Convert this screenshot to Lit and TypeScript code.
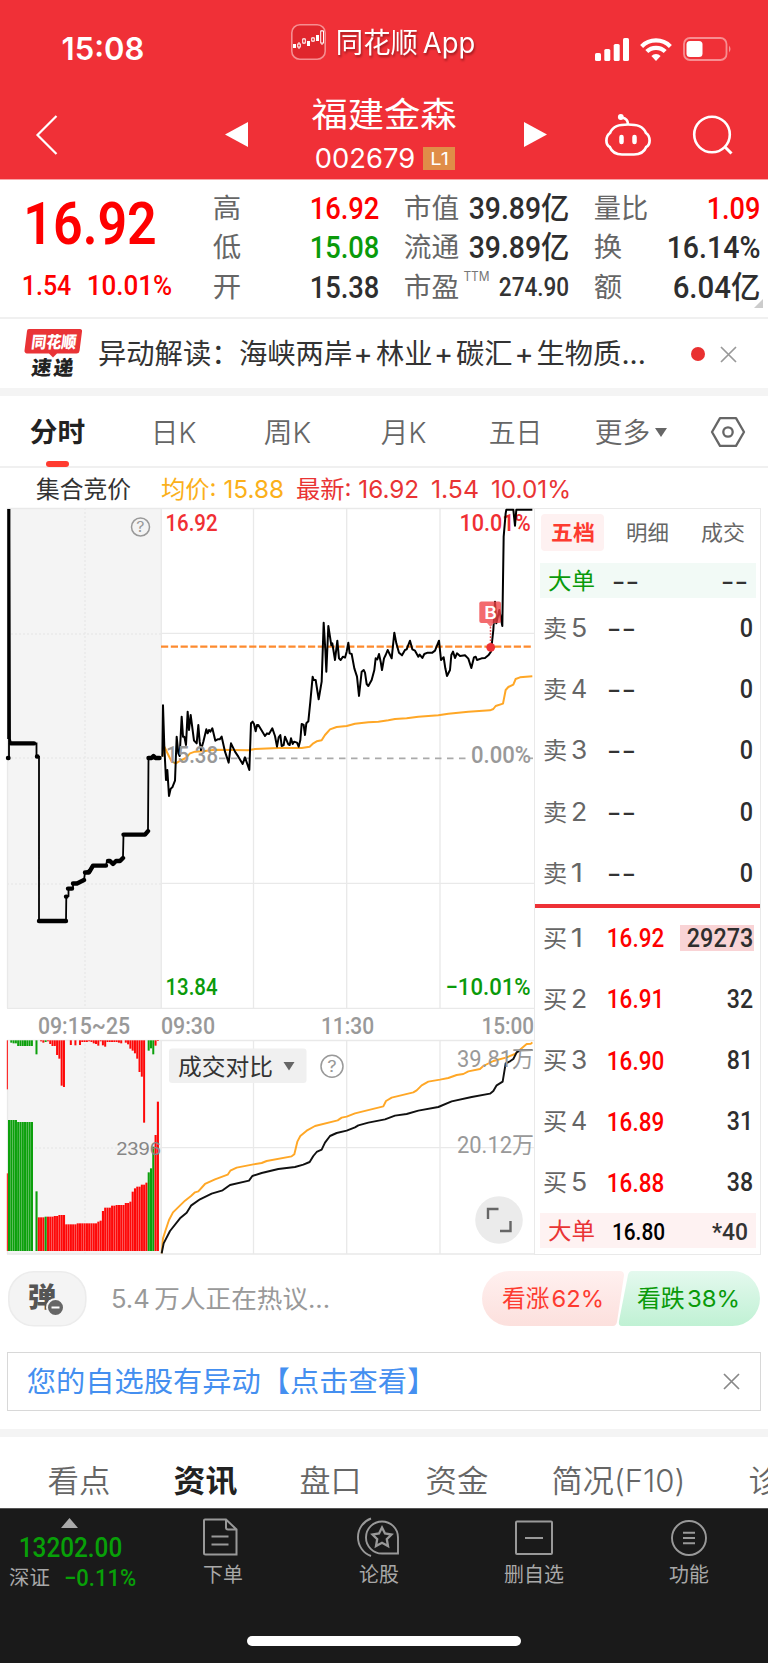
import { LitElement, html, svg, css } from "lit";
import { customElement } from "lit/decorators.js";

type Opt = { w?: number; c?: string; f?: "din" | "ui" | "hel"; h?: number };

const CJK = '"Noto Sans CJK SC", sans-serif';
const FAMILY = {
  din: `Roboto, ${CJK}`,
  ui: `Inter, ${CJK}`,
  hel: `"Liberation Sans", ${CJK}`,
};

/* One line of text whose glyphs fill exactly `width` pixels. */
const fit = (text: string, width: number, size: number, o: Opt = {}) => {
  const h = o.h ?? Math.round(size * 1.1);
  const b = size * 0.045;
  return html`<svg class="fit" width=${width} height=${h}>
    <text x=${-b} y=${h / 2 + size * 0.36} font-size=${size} font-weight=${o.w ?? 400}
      font-family=${FAMILY[o.f ?? "ui"]} fill=${o.c ?? "#333"}
      textLength=${width + 2 * b} lengthAdjust="spacingAndGlyphs">${text}</text></svg>`;
};

/* The same inside a chart, placed by its left edge and vertical centre. */
const label = (text: string, x: number, cy: number, width: number, size: number, o: Opt = {}) => svg`
  <text x=${x - size * 0.045} y=${cy + size * 0.36} font-size=${size} font-weight=${o.w ?? 500}
    font-family=${FAMILY[o.f ?? "din"]} fill=${o.c ?? "#999"}
    textLength=${width + size * 0.09} lengthAdjust="spacingAndGlyphs">${text}</text>`;

const RED = "#fe0000";
const GREEN = "#0a9a0a";

const base = css`
  :host { display: block; box-sizing: border-box; }
  * { box-sizing: border-box; }
  svg { display: block; flex: none; overflow: visible; }
`;

@customElement("app-header")
class AppHeader extends LitElement {
  static styles = [base, css`
    :host { background: #f03037; height: 180px; border-bottom: 1px solid #f8a5a8; }
    .status { height: 84px; display: grid; align-items: center; padding-left: 63px; grid-template-columns: 228px 46px 258px 45px 43px 1fr; }
    .low { margin-top: 14px; }
    .brand { filter: drop-shadow(1px 2px 1px rgba(60,0,0,.45)); }
    .nav { height: 95px; display: grid; align-items: center; padding-left: 36px; grid-template-columns: 189px 88px 211px 81px 88px 1fr; }
    .down { margin-top: 6px; }
    .title { align-self: start; padding-top: 11px; }
    .code { display: flex; align-items: center; gap: 9px; margin: 11px 0 0 3px; }
    .badge { width: 32px; height: 23px; background: #e08d48; display: flex; align-items: center; justify-content: center; }
  `];
  render() {
    const w = { c: "#fff" };
    return html`
      <div class="status">
        <div class="low">${fit("15:08", 80, 31, { ...w, w: 600 })}</div>
        <svg width="35" height="36" viewBox="0 0 35 36">
          <rect x=".8" y=".8" width="33.4" height="34.4" rx="8" fill="#e0262d" stroke="#f68d90" stroke-width="1.6"/>
          <g fill="#fff"><rect x="2" y="20" width="3" height="4"/><rect x="16" y="17" width="3" height="5"/><rect x="25" y="11" width="3" height="6"/></g>
          <g fill="none" stroke="#fff"><path d="M8 18v7M13 14v6M22 13v5M31 6v15"/><g fill="#e0262d"><rect x="6.7" y="20" width="2.6" height="3"/><rect x="11.7" y="15" width="2.6" height="4"/><rect x="20.7" y="14" width="2.6" height="3"/><rect x="29.7" y="7" width="2.8" height="12"/></g></g>
        </svg>
        <div class="brand">${fit("同花顺\u2009App", 137, 28, w)}</div>
        <svg class="low" width="34" height="23" fill="#fff"><rect y="15" width="6" height="8" rx="1.6"/><rect x="9.3" y="11" width="6" height="12" rx="1.6"/><rect x="18.7" y="6" width="6" height="17" rx="1.6"/><rect x="28" width="6" height="23" rx="1.6"/></svg>
        <svg class="low" width="32" height="23" viewBox="0 0 32 23" fill="none" stroke="#fff" stroke-width="4.2"><path d="M1.6 8.4a20.4 20.4 0 0 1 28.8 0"/><path d="M6.8 13.6a13 13 0 0 1 18.4 0"/><path d="M16 23l-4.6-5a6.4 6.4 0 0 1 9.2 0z" fill="#fff" stroke="none"/></svg>
        <svg class="low" width="48" height="24"><rect x="1" y="1" width="42.5" height="22" rx="6" fill="none" stroke="#f78e91" stroke-width="1.8"/><rect x="3.5" y="4" width="16" height="16" rx="3.5" fill="#fff"/><path d="M46 8.5q3 3.5 0 7z" fill="#f78e91"/></svg>
      </div>
      <div class="nav">
        <svg class="down" width="22" height="40" fill="none" stroke="#fff" stroke-width="2.2"><path d="M20.5 1L1.5 20l19 19"/></svg>
        <svg class="down" width="23" height="25"><path d="M23 0v25L0 12.5z" fill="#fff"/></svg>
        <div class="title">
          ${fit("福建金森", 142, 34.5, { ...w, h: 40 })}
          <div class="code">${fit("002679", 98, 27, { ...w, h: 24 })}<div class="badge">${fit("L1", 17, 17, w)}</div></div>
        </div>
        <svg class="down" width="23" height="25"><path d="M0 0v25l23-12.5z" fill="#fff"/></svg>
        <svg class="down" width="46" height="42" fill="none" stroke="#fff" stroke-width="2.7"><path d="M17 3.500q6 1 6 7"/><circle cx="15.800" cy="3" r="2.900" fill="#fff" stroke="none"/><path d="M23 10.500C14 10.500 8 12 5 19C2.800 20.500 1.500 23 1.400 26.500C1.400 29.500 2.600 32 4.800 33C7 38.500 11 40.500 17 40.500H29C35 40.500 39 38.500 41.200 33C43.400 32 44.600 29.500 44.600 26.500C44.500 23 43.200 20.500 41 19C38 12 32 10.500 23 10.500z"/><path d="M16.500 23v5M29.500 23v5" stroke-width="4.500" stroke-linecap="round"/></svg>
        <svg class="down" width="40" height="40" fill="none" stroke="#fff" stroke-width="2.6"><circle cx="19" cy="19.500" r="17.8"/><path d="M31.500 31.500l7 7" stroke-width="3"/></svg>
      </div>`;
  }
}

@customElement("quote-stats")
class QuoteStats extends LitElement {
  static styles = [base, css`
    :host { height: 139px; border-bottom: 2px solid #f0f0f0; display: grid; grid-template-columns: 214px 164px 163px 164px; column-gap: 0; }
    .price { padding: 12px 0 0 26px; }
    .change { display: flex; gap: 18px; margin: 21px 0 0 -3px; }
    .col { padding-top: 8px; display: grid; grid-auto-rows: 39.5px; }
    .gap { margin-left: 27px; margin-right: -27px; }
    .wide { margin-left: 54px; margin-right: -54px; }
    .row { display: flex; align-items: center; justify-content: space-between; }
    .ttm { align-self: flex-start; margin: 2px 0 0 -6px; }
    .corner { grid-column: 4; justify-self: end; margin: -13px -58px 0 0; }
  `];
  render() {
    const k = (t: string, w = 26) => fit(t, w, 27, { c: "#666" });
    const v = (t: string, w: number, c = "#2e2e2e") => fit(t, w, 30.5, { c, f: "din", w: 500 });
    return html`
      <div class="price">
        ${fit("16.92", 128, 60, { c: RED, f: "din", w: 600, h: 60 })}
        <div class="change">${fit("1.54", 47, 28, { c: RED, f: "din", w: 500, h: 24 })}${fit("10.01%", 83, 28, { c: RED, f: "din", w: 500, h: 24 })}</div>
      </div>
      <div class="col">
        <div class="row">${k("高")}${v("16.92", 67, RED)}</div>
        <div class="row">${k("低")}${v("15.08", 67, GREEN)}</div>
        <div class="row">${k("开")}${v("15.38", 67)}</div>
      </div>
      <div class="col gap">
        <div class="row">${k("市值", 53)}${v("39.89亿", 98)}</div>
        <div class="row">${k("流通", 53)}${v("39.89亿", 98)}</div>
        <div class="row">${k("市盈", 53)}<div class="ttm">${fit("TTM", 25, 13, { c: "#777" })}</div>${fit("274.90", 68, 26, { f: "din", w: 500 })}</div>
      </div>
      <div class="col wide">
        <div class="row">${k("量比", 52)}${v("1.09", 51, RED)}</div>
        <div class="row">${k("换")}${v("16.14%", 91)}</div>
        <div class="row">${k("额")}${v("6.04亿", 85)}</div>
      </div>
      <svg class="corner" width="9" height="9"><path d="M9 0v9H0z" fill="#ccc"/></svg>`;
  }
}

@customElement("news-strip")
class NewsStrip extends LitElement {
  static styles = [base, css`
    :host { height: 77px; border-bottom: 8px solid #f4f4f4; display: grid; align-items: center; padding-left: 24px; grid-template-columns: 75px 592px 30px 1fr; }
    .line { margin-top: 1px; }
    .logo { margin-top: -2px; }
    .headline { font: 28.3px Inter, "Noto Sans CJK SC", sans-serif; }
  `];
  render() {
    return html`
      <svg class="logo" width="59" height="48" viewBox="0 0 59 48">
        <path d="M5 0H56a2 2 0 0 1 2 2.500L55.500 22a3 3 0 0 1-3 2.500H33l-4 4-4-4H3a2.500 2.500 0 0 1-2.500-3L3 2a2 2 0 0 1 2-2z" fill="#e93336"/>
        <g font-family="Noto Sans CJK SC" font-weight="900" transform="skewX(-7)"><text x="9" y="18.500" font-size="16.500" fill="#fff" textLength="45" lengthAdjust="spacingAndGlyphs">同花顺</text><text x="12.500" y="46" font-size="20" fill="#222" textLength="42">速递</text></g>
      </svg>
      <svg class="line headline" width="546" height="30"><text y="24.500" fill="#333"><tspan x="-1">异动解读：</tspan><tspan x="140">海峡两岸</tspan><tspan x="254.500" font-size="29">+</tspan><tspan x="277">林业</tspan><tspan x="335" font-size="29">+</tspan><tspan x="357">碳汇</tspan><tspan x="415.500" font-size="29">+</tspan><tspan x="437.500">生物质...</tspan></text></svg>
      <svg class="line" width="14" height="14"><circle cx="7" cy="7" r="7" fill="#e93030"/></svg>
      <svg class="line" width="15" height="15" stroke="#999" stroke-width="1.7"><path d="M0 0l15 15M15 0L0 15"/></svg>`;
  }
}

@customElement("period-tabs")
class PeriodTabs extends LitElement {
  static styles = [base, css`
    :host { height: 72px; border-bottom: 2px solid #f0f0f0; display: grid; align-items: center; padding-left: 31px; grid-template-columns: 121px 113px 117px 108px 106px 115px 1fr; }
    .active { height: 72px; width: 53px; display: flex; flex-direction: column; align-items: center; padding-top: 21px; }
    .mark { width: 23px; height: 6px; border-radius: 3px; background: #ff3b30; margin-top: 14px; }
    .more { display: flex; align-items: center; gap: 6px; }
  `];
  render() {
    const t = (s: string, w: number) => fit(s, w, 28, { c: "#666", w: 350 });
    return html`
      <div class="active">${fit("分时", 53, 27, { c: "#222", w: 700 })}<div class="mark"></div></div>
      ${t("日K", 43)}${t("周K", 45)}${t("月K", 43)}${t("五日", 51)}
      <div class="more">${t("更多", 53)}<svg width="12" height="9"><path d="M0 0h12L6 9z" fill="#666"/></svg></div>
      <svg width="34" height="30" fill="none" stroke="#666" stroke-width="2.3" stroke-linejoin="round"><path d="M9 1.200h16L33 15l-8 13.800H9L1 15z"/><circle cx="17" cy="15" r="4.700"/></svg>`;
  }
}

@customElement("chart-legend")
class ChartLegend extends LitElement {
  static styles = [base, css`
    :host { height: 40px; padding: 1px 0 0 37px; display: grid; align-items: center; grid-template-columns: 125px 135px 135px 60px 1fr; }
  `];
  render() {
    const r = { c: "#e93434" };
    return html`${fit("集合竞价", 93, 24, { c: "#333", h: 28 })}${fit("均价: 15.88", 121, 24, { c: "#fbb01a" })}${fit("最新: 16.92", 121, 24, r)}${fit("1.54", 46, 24, r)}${fit("10.01%", 78, 24, r)}`;
  }
}

/* Intraday series, in thirds of a pixel from (155, 500). */
const PRICE = "22,770 24,616 28,740 33,840 37,810 42,888 47,866 52,862 60,842 65,710 70,760 74,768 80,650 84,710 88,710 93,735 98,635 102,690 107,645 117,722 125,730 130,675 134,725 138,750 145,725 154,688 158,700 162,690 166,695 172,685 181,722 188,718 194,718 200,710 210,755 221,788 228,730 240,755 250,770 263,792 270,772 283,810 288,670 293,665 297,672 302,694 306,675 310,675 330,708 336,700 342,702 352,685 360,708 366,740 371,712 376,705 380,738 386,735 390,710 400,733 404,735 408,715 413,732 417,725 426,728 431,740 436,720 440,672 446,675 450,705 454,670 460,664 466,605 473,530 476,540 482,540 491,598 500,545 506,368 511,450 514,515 520,378 529,436 532,430 540,480 547,422 552,475 557,480 564,470 570,473 575,455 580,428 584,460 590,462 598,505 606,530 612,588 620,515 626,510 630,518 635,552 640,558 650,540 658,510 662,475 667,478 672,462 677,485 681,510 687,475 692,465 698,450 710,475 718,398 724,430 732,458 741,466 750,450 755,448 765,422 772,448 780,452 790,470 794,464 802,474 808,462 818,458 832,458 840,452 852,422 858,480 866,472 871,505 876,528 885,510 889,465 894,455 900,474 906,460 915,468 930,466 940,476 949,504 957,472 962,470 966,480 980,475 990,474 1000,466 1008,455 1015,390 1020,305 1024,370 1033,330 1042,378 1046,110 1052,40 1054,29 1075,29 1080,77 1084,29 1132,29";
const AVERAGE = "22,770 28,740 40,765 50,785 62,790 80,780 92,774 105,760 120,755 150,753 180,749 230,750 280,751 300,747 370,744 440,744 464,740 475,730 485,724 500,721 510,705 525,688 545,681 575,678 600,671 640,667 670,665 700,661 720,657 755,655 790,650 850,646 880,641 940,635 1005,631 1015,627 1022,618 1044,611 1052,570 1060,561 1075,554 1082,537 1095,532 1132,529";
/* Cumulative volume, in thirds of a pixel from (155, 1030). */
const VOL_PREV = "20,670 24,625 32,600 42,570 54,547 90,512 108,498 120,487 130,484 150,462 180,448 218,434 226,422 245,413 295,403 320,399 335,393 410,379 418,373 427,335 436,318 455,302 480,288 548,271 560,263 575,260 600,250 685,229 693,213 710,203 775,187 785,181 800,166 820,155 855,149 880,144 905,135 925,132 940,124 975,117 985,108 1015,93 1055,82 1080,72 1115,42 1128,41 1132,37";
const VOL_NOW = "20,670 26,640 45,603 75,565 95,548 108,527 135,508 170,491 203,481 225,465 282,452 292,438 320,429 370,417 420,411 445,404 464,396 475,378 485,366 500,359 510,338 525,318 545,309 575,302 600,292 610,286 640,278 690,268 720,257 755,252 790,242 850,231 890,214 950,201 1005,191 1015,183 1025,166 1043,155 1052,100 1065,94 1075,87 1085,67 1095,61 1132,60";
const AUCTION = "9,758 9,509 10,739 11,743.4 34,743.4 36.5,743.4 36.5,757 39,757 39,921 66,921 66.3,896.6 68.5,896 68.5,888.6 73,888 73,883.5 80,882 84,880 85,872.5 89,870 93,865.6 106,865.5 107,861 111,861 113,864 115,861 120,860 123,857 123.5,834.6 145,834.6 148,831 148.5,758 152,758 153,756 155,758 160,758";
const AUCTION_DOTS = ["M11 743.4H34", "M37 756.5h.5", "M39 921H66", "M66 896.600h.5M68 888.600h4M73 883.500h4L84 880M85 872.500h4L93 865.600H106", "M108 861h2l3 3 3-3h4l3-3", "M123.500 834.600H145l3-3.500", "M148.500 758h3l2-2 2 2h4", "M8 758h.5"];

/* Auction bars: [slot count, top, is green]; heights in thirds of a pixel from 1030. */
const MATCHED: [number, number, boolean][] = [
  [4, 270, true], [7, 276, true], [1, 663, true], [1, 484, true], [3, 562, false], [1, 560, true], [3, 560, false], [2, 558, false], [3, 555, false],
  [5, 583, false], [9, 580, false], [1, 575, false], [1, 572, false], [1, 543, false], [3, 533, false], [2, 527, false], [4, 525, false], [2, 519, false],
  [1, 515, false], [1, 485, false], [1, 475, false], [2, 470, false], [2, 464, false], [1, 458, false], [1, 427, true], [1, 415, true], [1, 350, true], [1, 315, false], [1, 215, false],
];
const UNMATCHED = [31, 38, 40, 40, 48, 48, 48, 48, 48, 48, 48, 31, 73, 31, 34, 38, 36, 34, 42, 48, 48, 75, 86, 167, 171, 31, 31, 45, 31, 46, 31, 45, 36, 36, 36, 34, 36, 40, 42, 47, 34, 46, 50, 36, 36, 36, 36, 36, 38, 40, 31, 38, 43, 56, 62, 70, 86, 126, 140, 278, 31, 62, 55, 73, 47, 33];
const GREEN_TOP = new Set([1, 2, 3, 4, 5, 6, 7, 8, 9, 10, 12, 16, 61, 62, 63]);

@customElement("trend-chart")
class TrendChart extends LitElement {
  static styles = [base, css`:host { width: 534px; height: 747px; }`];
  bars() {
    const out: unknown[] = [];
    let slot = 0;
    for (const [n, top, green] of MATCHED)
      for (let i = 0; i < n; i++, slot++)
        out.push(svg`<rect x=${24 + slot * 6.87} y=${top} width="6.3" height=${663 - top} fill=${green ? "#0ca00c" : "#fe0808"}/>`);
    UNMATCHED.forEach((b, i) => out.push(svg`<rect x=${24 + i * 6.87} y="31" width="6" height=${b - 31} fill=${GREEN_TOP.has(i) ? "#0ca00c" : "#fe0808"}/>`));
    return out;
  }
  render() {
    return html`<svg width="534" height="747" viewBox="0 508 534 747">
      <g><rect x="7" y="508" width="154" height="500" fill="#f4f4f4"/><rect x="7" y="1040" width="154" height="214" fill="#f4f4f4"/></g>
      <g stroke="#e9e9e9" stroke-width="1.3" fill="none">
        <path d="M7 508.500H534M7 1008.300H534M7 1040.500H534M7 1254H534"/>
        <path d="M161.300 508V1008M161.300 1040V1254M253.500 508V1008M253.500 1040V1254M346.700 508V1008M346.700 1040V1254M440 508V1008M440 1040V1254"/>
        <path d="M161 633.300H534M161 883.300H534M161 1147.700H534"/>
        <path d="M7.500 508V1008M7.500 1040V1254"/>
        <path d="M7 634H161M7 884H161M7 758H161M85 508V1008M85 1040V1254M7 1148H161" stroke-dasharray="2 2"/>
      </g>
      <polyline points=${AUCTION} fill="none" stroke="#000" stroke-width="1.8"/>
      <path d=${AUCTION_DOTS.join("")} fill="none" stroke="#000" stroke-width="4.400" stroke-linecap="round" stroke-linejoin="round"/>
      <path d="M8.800 509V739" stroke="#000" stroke-width="3.200"/>
      <path d="M161 646.700H533" stroke="#fd8a2e" stroke-width="2.200" stroke-dasharray="7.200 2.600"/>
      <path d="M219 758.300H470" stroke="#aaa" stroke-width="1.700" stroke-dasharray="6.500 5.500"/>
      <path d="M529 758.300h4" stroke="#aaa" stroke-width="1.700"/>
      ${label("16.92", 166.500, 522.500, 50, 24, { c: "#f02f34" })}
      ${label("10.01%", 460.500, 522.500, 69, 24, { c: "#f02f34" })}
      ${label("13.84", 166.500, 986, 50, 24, { c: GREEN })}
      ${label("−10.01%", 446.500, 986, 83, 24, { c: GREEN })}
      <g transform="translate(155 500) scale(.33333)" fill="none" stroke-width="6" stroke-linejoin="round">
        <polyline points=${AVERAGE} stroke="#ffa726"/><polyline points=${PRICE} stroke="#000"/>
      </g>
      ${label("15.38", 167, 755, 50, 23, { c: "#999" })}
      ${label("0.00%", 472, 755, 58, 23, { c: "#999" })}
      <g><rect x="479.300" y="601.500" width="21.700" height="21.500" rx="2" fill="#ef4145" fill-opacity=".78"/><path d="M487 623h7l-3.500 4z" fill="#f3787b"/><path d="M490.500 627v16" stroke="#e84a4f" stroke-width="1.500" stroke-dasharray="1.600 1.500"/><circle cx="490.700" cy="647.300" r="4.400" fill="#ed3237"/></g>
      ${label("B", 485, 612.600, 11, 17, { c: "#fff", f: "ui", w: 600 })}
      <g fill="none" stroke="#999" stroke-width="1.500"><circle cx="140.500" cy="527" r="9"/><circle cx="332" cy="1066.300" r="11"/></g>
      ${label("?", 137, 527.300, 7, 14, { f: "ui", w: 400 })}
      ${label("09:15~25", 39, 1025.500, 90, 24)}${label("09:30", 162, 1025.500, 52, 24)}${label("11:30", 322, 1025.500, 51, 24)}${label("15:00", 482.500, 1025.500, 50.500, 24)}
      <g transform="translate(0 1030) scale(.33333)"><rect x="20.500" y="31" width="3" height="147" fill="#fe0808"/><rect x="20.500" y="430" width="3" height="233" fill="#fe0808"/>${this.bars()}</g>
      ${label("2396", 117, 1148.800, 43, 18.500, { f: "hel", w: 400, c: "#868686" })}
      <rect x="169" y="1048.500" width="137.500" height="34.500" rx="3" fill="#efefef" fill-opacity=".93"/>
      ${label("成交对比", 179, 1066.300, 93, 23, { f: "ui", w: 400, c: "#333" })}
      <path d="M283.500 1062h11l-5.500 8.500z" fill="#666"/>
      ${label("?", 328, 1066.700, 8, 16, { f: "ui", w: 400 })}
      <g transform="translate(155 1030) scale(.33333)" fill="none" stroke-width="5.800" stroke-linejoin="round">
        <polyline points=${VOL_PREV} stroke="#ffa726"/><polyline points=${VOL_NOW} stroke="#111"/>
      </g>
      ${label("39.81万", 458, 1058.500, 75, 23, { w: 400 })}${label("20.12万", 458, 1144.500, 75, 23, { w: 400 })}
      <circle cx="499" cy="1220" r="23.800" fill="#ebebeb"/>
      <path d="M488 1219v-10h10.500M500 1231h10.500v-10" fill="none" stroke="#666" stroke-width="2.400"/>
    </svg>`;
  }
}

@customElement("order-book")
class OrderBook extends LitElement {
  static styles = [base, css`
    :host { width: 227px; height: 747px; border: 1px solid #e9e9e9; }
    .tabs { height: 54px; padding: 5px 0 0 6px; display: grid; grid-template-columns: 86px 75px 1fr; }
    .tab { height: 36px; display: flex; align-items: center; }
    .on { width: 63px; height: 37px; justify-content: center; background: #fef1f1; border-radius: 4px; }
    .big { height: 35px; margin: 0 4px 0 5px; padding: 0 9px; display: grid; align-items: center; grid-template-columns: 64px 1fr auto; background: #f2faf6; }
    .buy { background: #fef2f2; }
    .row { height: 61.2px; padding: 0 8px 1px 9px; display: grid; align-items: center; grid-template-columns: 28px 36px 1fr auto; }
    .rule { height: 3.6px; background: #ee3136; }
    .hot { background: #f9d3d5; padding: 0 2px 0 8px; margin-right: -2px; }
  `];
  dashes(w: number) {
    return fit("--", w, 27, { c: "#333" });
  }
  level(side: string, n: number, price: string, qty: string, w: number) {
    const q = fit(qty, w, 25.5, { f: "din", w: 500, c: "#2e2e2e", h: 26 });
    return html`<div class="row">${fit(side, 22, 24, { c: "#666" })}${fit(String(n), n === 1 ? 10 : 14, 25, { c: "#666" })}
      ${price === "--" ? this.dashes(27) : fit(price, 55, 26, { f: "din", w: 500, c: RED })}
      ${qty.length > 4 ? html`<div class="hot">${q}</div>` : q}</div>`;
  }
  render() {
    return html`
      <div class="tabs">
        <div class="tab on">${fit("五档", 42, 21, { c: "#fd3b30", w: 700 })}</div>
        <div class="tab">${fit("明细", 41, 21, { c: "#666" })}</div>
        <div class="tab">${fit("成交", 42, 21, { c: "#666" })}</div>
      </div>
      <div class="big">${fit("大单", 45, 23, { c: GREEN, h: 27 })}${this.dashes(25)}${this.dashes(25)}</div>
      ${[5, 4, 3, 2, 1].map((n) => this.level("卖", n, "--", "0", 11))}
      <div class="rule"></div>
      ${this.level("买", 1, "16.92", "29273", 64)}
      ${this.level("买", 2, "16.91", "32", 24)}
      ${this.level("买", 3, "16.90", "81", 24)}
      ${this.level("买", 4, "16.89", "31", 24)}
      ${this.level("买", 5, "16.88", "38", 24)}
      <div class="big buy">${fit("大单", 45, 23, { c: "#e93434" })}${fit("16.80", 51, 24, { f: "din", w: 500, c: "#000" })}${fit("*40", 34, 24, { f: "din", w: 500 })}</div>`;
  }
}

@customElement("talk-bar")
class TalkBar extends LitElement {
  static styles = [base, css`
    :host { height: 72px; padding: 16px 8px 0; display: grid; align-items: start; grid-template-columns: 104px 370px 278px; }
    .talk { padding-top: 14px; }
  `];
  render() {
    return html`
      <svg width="78" height="56"><rect x=".8" y=".8" width="77" height="54" rx="25" fill="#f4f4f4" stroke="#ececec" stroke-width="1.600"/>
        ${label("弹", 21, 26, 26, 27, { f: "ui", w: 900, c: "#555" })}
        <circle cx="47.500" cy="36.500" r="8.500" fill="#666" stroke="#f4f4f4" stroke-width="2"/><path d="M43.500 36.500h8" stroke="#fff" stroke-width="2"/></svg>
      <div class="talk">${fit("5.4\u2009万人正在热议...", 217, 25, { c: "#999" })}</div>
      <svg width="278" height="56">
        <defs>
          <linearGradient id="up" x2="0" y2="1"><stop stop-color="#fff0ef"/><stop offset="1" stop-color="#fce0dd"/></linearGradient>
          <linearGradient id="dn" x2="0" y2="1"><stop stop-color="#e4f9ee"/><stop offset="1" stop-color="#c0f1d4"/></linearGradient>
        </defs>
        <path d="M27.500 0H138a4 4 0 0 1 4 4.500L135 51q-1 4-4 4H27.500a27.500 27.500 0 0 1 0-55z" fill="url(#up)"/>
        <path d="M250.500 0H150q-3 0-4 4L137 50q-1 5 3 5H250.500a27.500 27.500 0 0 0 0-55z" fill="url(#dn)"/>
        ${label("看涨\u200a62%", 21, 27.500, 100, 23.500, { f: "ui", w: 400, c: "#fd3b30" })}
        ${label("看跌\u200a38%", 156, 27.500, 101, 23.500, { f: "ui", w: 400, c: GREEN })}
      </svg>`;
  }
}

@customElement("alert-box")
class AlertBox extends LitElement {
  static styles = [base, css`
    :host { height: 110px; padding: 25px 7px 18px; border-bottom: 8px solid #f4f4f4; }
    .box { height: 59px; border: 1.5px solid #d8d8d8; padding: 0 21px 0 20px; display: flex; align-items: center; justify-content: space-between; }
  `];
  render() {
    return html`<div class="box">${fit("您的自选股有异动【点击查看】", 407, 28.500, { c: "#448ff0" })}
      <svg width="15" height="15" stroke="#888" stroke-width="1.700"><path d="M0 0l15 15M15 0L0 15"/></svg></div>`;
  }
}

@customElement("info-tabs")
class InfoTabs extends LitElement {
  static styles = [base, css`
    :host { height: 71px; padding: 17px 0 0 49px; overflow: hidden; display: grid; align-items: center; grid-template-columns: 126px 126px 126px 126px 197px 60px; }
  `];
  render() {
    const t = (s: string, w: number) => fit(s, w, 31, { c: "#666", w: 350 });
    return html`${t("看点", 60)}${fit("资讯", 61, 31, { c: "#222", w: 700 })}${t("盘口", 59)}${t("资金", 60)}${t("简况(F10)", 131)}${t("诊", 29)}`;
  }
}

@customElement("bottom-bar")
class BottomBar extends LitElement {
  static styles = [base, css`
    :host { height: 155px; background: #1a1a1a; border-top: 1px solid #555; }
    .items { height: 127px; display: grid; align-items: start; grid-template-columns: 203px 156px 146px 165px 1fr; }
    .index { padding: 9px 0 0 10px; display: grid; justify-items: start; }
    .arrow { margin-left: 51px; }
    .num { margin: 8px 0 0 10px; }
    .line { display: flex; align-items: center; gap: 16px; margin-top: 9px; }
    .item { width: max-content; padding-top: 9px; display: grid; justify-items: center; gap: 8px; }
    .doc { margin-right: 4px; }
    .home { width: 274px; height: 10px; border-radius: 5px; background: #fff; margin: 0 auto; }
  `];
  render() {
    const t = (s: string, w: number) => fit(s, w, 20, { c: "#a8a8a8" });
    return html`
      <div class="items">
        <div class="index">
          <svg class="arrow" width="17" height="10"><path d="M0 10L8.500 0 17 10z" fill="#aaa"/></svg>
          <div class="num">${fit("13202.00", 101, 28, { f: "din", w: 500, c: "#08a008", h: 22 })}</div>
          <div class="line">${fit("深证", 39, 20, { c: "#a8a8a8", h: 22 })}${fit("−0.11%", 70, 23.500, { f: "din", w: 500, c: "#08a008", h: 18 })}</div>
        </div>
        <div class="item"><svg class="doc" width="35" height="38" fill="none" stroke="#999" stroke-width="2"><path d="M2 1.500h21l10.500 10V36.500H2.500q-1.500 0-1.500-1.500V2.500q0-1 1-1zM23 1.500V9.500q0 2 2 2h8.500M8.500 18.500h17M8.500 26.500h17"/></svg>${t("下单", 38)}</div>
        <div class="item"><svg width="40" height="38" fill="none" stroke="#999" stroke-width="1.900"><path d="M39 19.500V35.500H23a16 16 0 1 1 16-16z"/><path d="M12 .5a20 20 0 0 0 0 37.500"/><path d="M23 9.500l3 6 6.500 1-4.700 4.700 1.200 6.800-6-3.200-6 3.200 1.200-6.800-4.700-4.700 6.500-1z" stroke-width="2.300"/></svg>${t("论股", 38)}</div>
        <div class="item"><svg width="38" height="38" fill="none" stroke="#999" stroke-width="2"><rect x="1" y="3.500" width="36" height="32.500" rx="1"/><path d="M10 20h18"/></svg>${t("删自选", 58)}</div>
        <div class="item"><svg width="36" height="38" fill="none" stroke="#999" stroke-width="1.900"><circle cx="18" cy="20" r="17"/><path d="M12 14.700h12M12 20h12M12 25.300h12"/></svg>${t("功能", 38)}</div>
      </div>
      <div class="home"></div>`;
  }
}

@customElement("app-root")
class AppRoot extends LitElement {
  static styles = css`
    :host { display: block; width: 768px; height: 1663px; overflow: hidden; background: #fff; }
    .market { display: flex; }
  `;
  render() {
    return html`<app-header></app-header><quote-stats></quote-stats><news-strip></news-strip><period-tabs></period-tabs><chart-legend></chart-legend>
      <div class="market"><trend-chart></trend-chart><order-book></order-book></div>
      <talk-bar></talk-bar><alert-box></alert-box><info-tabs></info-tabs><bottom-bar></bottom-bar>`;
  }
}
